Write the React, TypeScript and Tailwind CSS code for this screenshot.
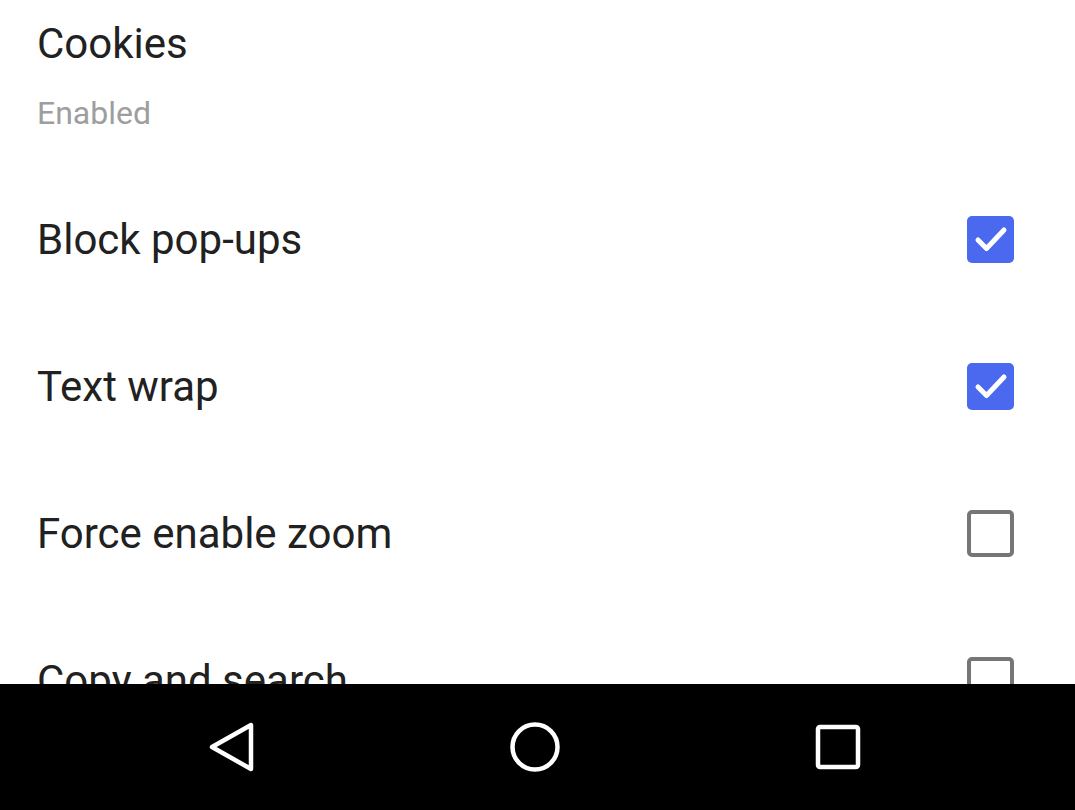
const rows = [
  { label: 'Block pop-ups', checked: true },
  { label: 'Text wrap', checked: true },
  { label: 'Force enable zoom', checked: false },
  { label: 'Copy and search', checked: false },
];

const CheckBox = ({ checked }: { checked: boolean }) => {
  if (!checked) {
    return <div className="w-[47px] h-[47px] rounded-[5px] border-[4px] border-[#767676]" />;
  }
  return (
    <div className="w-[47px] h-[47px] rounded-[5px] bg-[#4a69ee] flex items-center justify-center">
      <svg width="47" height="47" viewBox="0 0 47 47">
        <path d="M11 24 L19.5 32.5 L37 14" fill="none" stroke="white" strokeWidth="5" strokeLinecap="round" strokeLinejoin="round" />
      </svg>
    </div>
  );
};

export default function App() {
  return (
    <div className="w-[1075px] h-[810px] flex flex-col bg-white overflow-hidden" style={{ fontFamily: 'Roboto, "Noto Sans", sans-serif' }}>
      <div className="flex-1 overflow-hidden">
        {/* Cookies */}
        <div className="h-[166px] pl-[37px] pt-[19px]">
          <div className="text-[42px] leading-[50px] text-[#212121]">Cookies</div>
          <div className="text-[32px] leading-[36px] mt-[26px] text-[#9e9e9e]">Enabled</div>
        </div>

        {rows.map((row) => (
          <div key={row.label} className="h-[147px] flex items-center justify-between pl-[37px] pr-[61px]">
            <span className="text-[42px] text-[#212121] leading-none">{row.label}</span>
            <CheckBox checked={row.checked} />
          </div>
        ))}
      </div>

      {/* Navigation bar */}
      <div className="h-[126px] bg-black flex items-center justify-center gap-[203px] pr-[6px]">
        <div className="w-[100px] flex justify-center">
          <svg width="48" height="52" viewBox="0 0 48 52">
            <path d="M4 26 L43 4 L43 48 Z" fill="none" stroke="white" strokeWidth="4.5" strokeLinejoin="round" />
          </svg>
        </div>
        <div className="w-[100px] flex justify-center">
          <svg width="52" height="52" viewBox="0 0 52 52">
            <circle cx="26" cy="26" r="22.5" fill="none" stroke="white" strokeWidth="4.5" />
          </svg>
        </div>
        <div className="w-[100px] flex justify-center">
          <svg width="46" height="46" viewBox="0 0 46 46">
            <rect x="3" y="3" width="40" height="40" rx="2" fill="none" stroke="white" strokeWidth="4.5" />
          </svg>
        </div>
      </div>
    </div>
  );
}
